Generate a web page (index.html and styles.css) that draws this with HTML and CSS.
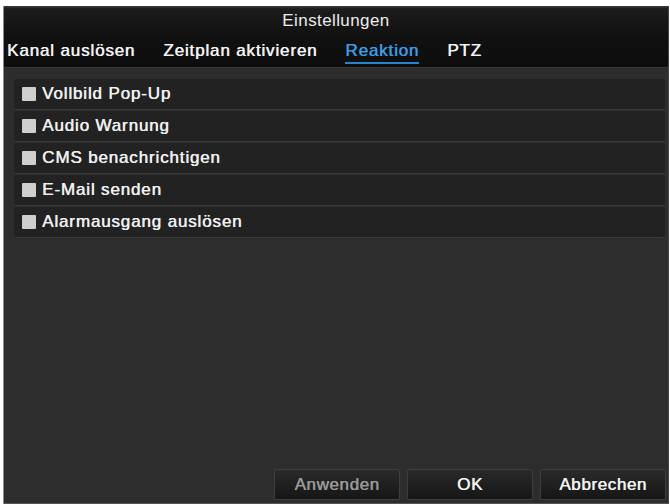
FILE: index.html
```html
<!DOCTYPE html>
<html lang="de">
<head>
<meta charset="utf-8">
<title>Einstellungen</title>
<link rel="stylesheet" href="styles.css">
</head>
<body>
<div class="dialog">
  <div class="header">
    <div class="title">Einstellungen</div>
    <div class="tabs">
      <span class="tab">Kanal auslösen</span>
      <span class="tab">Zeitplan aktivieren</span>
      <span class="tab active">Reaktion</span>
      <span class="tab">PTZ</span>
    </div>
  </div>
  <div class="content">
    <div class="list">
      <div class="row"><span class="box"></span><span class="label">Vollbild Pop-Up</span></div>
      <div class="row"><span class="box"></span><span class="label">Audio Warnung</span></div>
      <div class="row"><span class="box"></span><span class="label">CMS benachrichtigen</span></div>
      <div class="row"><span class="box"></span><span class="label">E-Mail senden</span></div>
      <div class="row"><span class="box"></span><span class="label">Alarmausgang auslösen</span></div>
    </div>
  </div>
  <div class="footer">
    <button class="btn disabled">Anwenden</button>
    <button class="btn">OK</button>
    <button class="btn">Abbrechen</button>
  </div>
</div>
</body>
</html>
```
FILE: styles.css
```css
html, body {
  margin: 0;
  padding: 0;
  background: #ffffff;
}
body {
  font-family: "Liberation Sans", Arial, sans-serif;
  color: #f0f0f0;
}
.dialog {
  margin: 6px 1px 0 3px;
  height: 498px;
  display: flex;
  flex-direction: column;
  background: #2d2d2d;
  border-left: 1px solid #8c8c8c;
  border-right: 1px solid #444;
  box-sizing: border-box;
}
.header {
  height: 61px;
  display: flex;
  flex-direction: column;
  background: linear-gradient(#3c3c3c 0px, #1c1c1c 3px, #111111 30px, #0d0d0d 61px);
  border-bottom: 1px solid #3a3a3a;
}
.title {
  height: 30px;
  line-height: 30px;
  text-align: center;
  font-size: 17px;
  letter-spacing: 0.4px;
  color: #ececec;
}
.tabs {
  display: flex;
  gap: 28px;
  padding-left: 3px;
  padding-top: 5px;
}
.tab {
  font-size: 17px;
  line-height: 20px;
  letter-spacing: 0.85px;
  text-shadow: 0.5px 0 0 currentColor;
  padding-bottom: 1px;
  color: #f2f2f2;
  border-bottom: 2px solid transparent;
}
.tab.active {
  color: #3c9be3;
  border-bottom-color: #2585cc;
}
.content {
  padding: 11px 3px 0 10px;
}
.list {
  display: flex;
  flex-direction: column;
  gap: 1px;
}
.row {
  height: 31px;
  display: flex;
  align-items: center;
  padding-left: 8px;
  background: #222222;
  border-bottom: 1px solid #3a3a3a;
  border-radius: 2px;
  box-sizing: border-box;
}
.box {
  width: 14px;
  height: 14px;
  background: #cfcfcf;
  margin-right: 6px;
  border-radius: 1px;
  flex: none;
}
.label {
  font-size: 17px;
  letter-spacing: 0.85px;
  text-shadow: 0.5px 0 0 currentColor;
  color: #f0f0f0;
}
.footer {
  margin-top: auto;
  display: flex;
  justify-content: flex-end;
  gap: 7px;
  padding: 0 2px 3px 0;
  border-bottom: 1px solid #555;
}
.btn {
  width: 126px;
  height: 31px;
  font-family: "Liberation Sans", Arial, sans-serif;
  font-size: 17px;
  letter-spacing: 0.6px;
  text-shadow: 0.5px 0 0 currentColor;
  color: #f2f2f2;
  background: linear-gradient(#2a2a2a, #161616);
  border: 1px solid #3e3e3e;
  border-radius: 2px;
  padding: 0;
}
.btn.disabled {
  color: #9a9a9a;
}
```
